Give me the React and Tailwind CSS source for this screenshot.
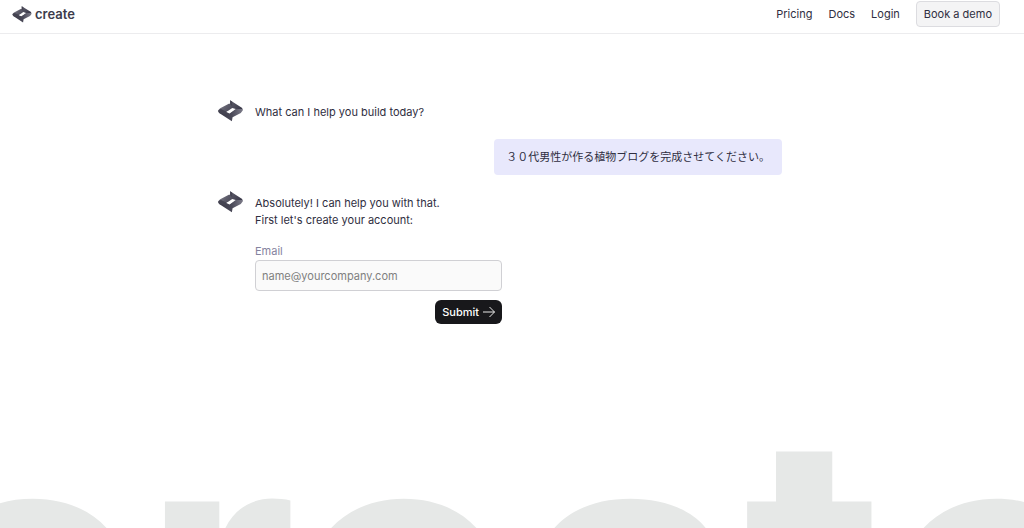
import { useId } from 'react';

function Mark({ className }) {
  const id = useId();
  return (
    <svg viewBox="0 0 72 64" className={className} aria-hidden="true">
      <defs>
        <linearGradient id={`${id}t`} x1="0" y1="0" x2="1" y2="0.4">
          <stop offset="0" stopColor="#8b8a96" />
          <stop offset="0.45" stopColor="#5e5d6b" />
          <stop offset="1" stopColor="#3b3a4a" />
        </linearGradient>
        <linearGradient id={`${id}b`} x1="0" y1="0" x2="1" y2="0">
          <stop offset="0" stopColor="#3a3947" />
          <stop offset="0.55" stopColor="#4a4958" />
          <stop offset="1" stopColor="#7b7a88" />
        </linearGradient>
      </defs>
      <path d="M35 1 L70 23 Q72 27 70 32 L50 28 L24 34 L12 40 L1 33 Q1 27 6 24 L31 11 L35 11 Z" fill={`url(#${id}t)`} />
      <path d="M1 30 L24 34 L33 38 L50 26 L71 26 Q72 34 66 38 L42 50 L40 62 L3 38 Q0 34 1 30 Z" fill={`url(#${id}b)`} />
      <path d="M35 1 L41 5 L41 18 L35 12 Z M1 29 L8 26 L25 34 L33 38 L28 44 L3 38 Q0 34 1 29 Z" fill="#454452" />
      <path d="M24 35 L41 23 L51 26 L33 39 Z" fill="#fff" />
    </svg>
  );
}

function BotMessage({ children }) {
  return (
    <div className="flex items-start gap-3">
      <Mark className="h-[22px] w-[25px] shrink-0" />
      <div className="min-w-0 pt-1">{children}</div>
    </div>
  );
}

export default function App() {
  return (
    <div className="flex h-screen flex-col overflow-hidden bg-white font-['Inter','Noto_Sans_CJK_JP',sans-serif] text-[11px] leading-[17px] text-[#2f2e41]">
      <header className="flex h-[34px] shrink-0 items-start justify-between border-b border-[#ececee] pt-px pr-6 pl-3">
        <a href="#home" className="flex h-[26px] items-center gap-[3px] text-[13px] font-semibold text-[#3c3b4b]">
          <Mark className="h-[17px] w-5" />
          create
        </a>
        <nav className="flex h-[26px] items-center gap-4">
          <a href="#pricing">Pricing</a>
          <a href="#docs">Docs</a>
          <a href="#login">Login</a>
          <button type="button" className="h-[26px] rounded border border-[#dcdce0] bg-[#f4f4f5] px-[7px]">
            Book a demo
          </button>
        </nav>
      </header>

      <main className="mx-auto w-full max-w-[588px] shrink-0 pt-[66px] pr-6">
        <BotMessage>
          <p>What can I help you build today?</p>
        </BotMessage>
        <div className="mt-[17px] flex justify-end">
          <p className="rounded bg-[#e8e8fc] px-3 py-[9px] leading-[18px]">
            ３０代男性が作る植物ブログを完成させてください。
          </p>
        </div>
        <div className="mt-4">
          <BotMessage>
            <p>
              Absolutely! I can help you with that.
              <br />
              First let's create your account:
            </p>
            <form className="mt-[14px] flex w-[247px] flex-col" onSubmit={(e) => e.preventDefault()}>
              <label htmlFor="email" className="text-[#8583a0]">
                Email
              </label>
              <input
                id="email"
                type="email"
                placeholder="name@yourcompany.com"
                className="h-[31px] w-full rounded border border-[#d0d0d4] bg-[#fafafa] px-[6px] outline-none placeholder:text-[#808080]"
              />
              <button
                type="submit"
                className="mt-[9px] flex h-6 items-center gap-1 self-end rounded-md bg-[#18181b] px-[7px] font-medium text-white"
              >
                Submit
                <svg viewBox="0 0 12 12" className="h-3 w-3" fill="none" stroke="currentColor" aria-hidden="true">
                  <path d="M0 6h11.5M6.5 1l5 5-5 5" strokeWidth="0.9" />
                </svg>
              </button>
            </form>
          </BotMessage>
        </div>
      </main>

      <div className="mt-14 flex min-h-0 flex-1 justify-center overflow-hidden" aria-hidden="true">
        <p className="text-[384px] leading-none font-bold text-[#e6e8e7]">create</p>
      </div>
    </div>
  );
}
